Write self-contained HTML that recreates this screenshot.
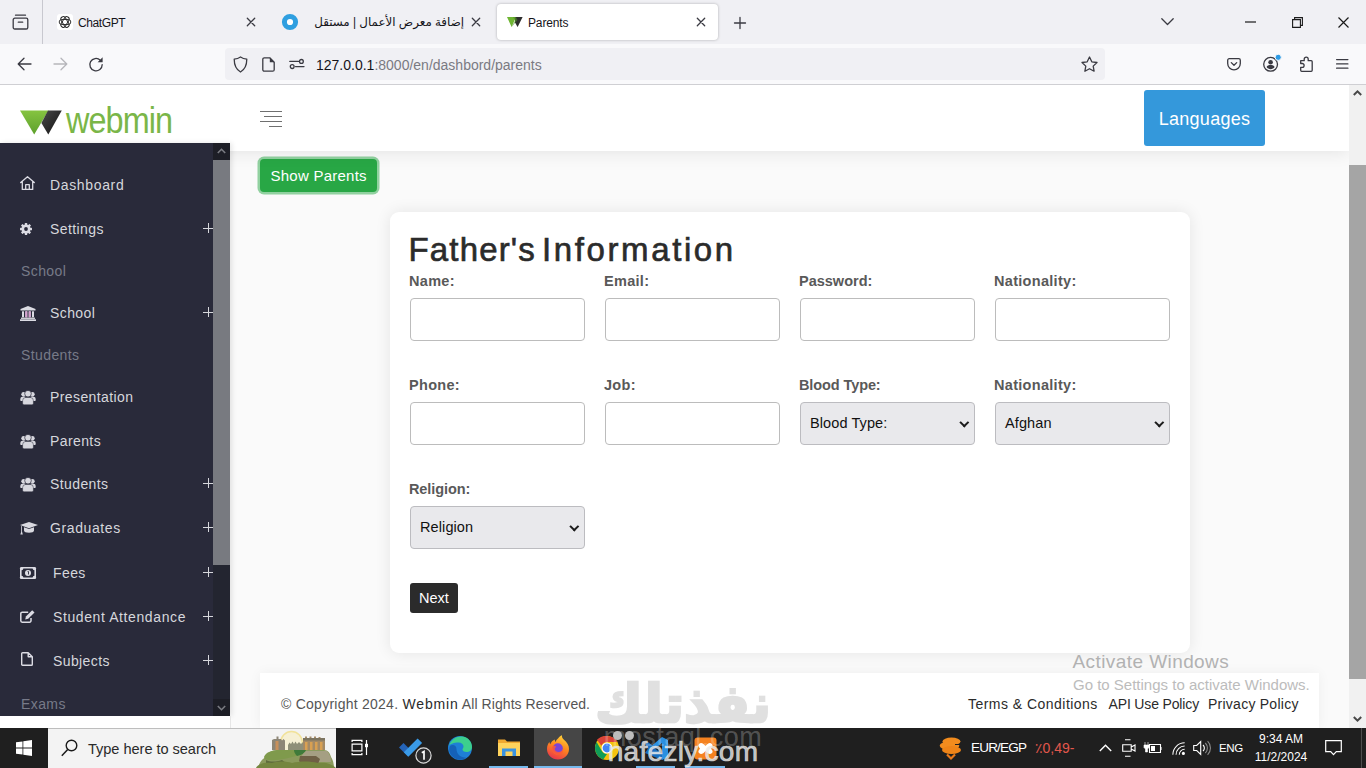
<!DOCTYPE html>
<html lang="en">
<head>
<meta charset="utf-8">
<title>Parents</title>
<style>
*{box-sizing:border-box;margin:0;padding:0}
html,body{width:1366px;height:768px;overflow:hidden;background:#fff;font-family:"Liberation Sans","Noto Sans CJK SC",sans-serif;}
.abs{position:absolute}
#root{position:relative;width:1366px;height:768px;overflow:hidden}
/* ---------- browser chrome ---------- */
#tabbar{left:0;top:0;width:1366px;height:44px;background:#f0f0f4}
#toolbar{left:0;top:44px;width:1366px;height:40px;background:#f9f9fb;border-bottom:1px solid #cfcfd3}
#toolbar{height:41px}
.tabtxt{font-size:12px;letter-spacing:-.15px;color:#15141a;white-space:nowrap;line-height:16px}
#tab3{left:497px;top:4px;width:221px;height:36px;background:#fff;border-radius:4px;box-shadow:0 0 3px rgba(0,0,0,.28)}
#urlbar{left:225px;top:48px;width:880px;height:32px;background:#f0f0f4;border-radius:4px}
#url{left:316px;top:57px;font-size:14px;line-height:17px;color:#15141a;white-space:nowrap}
#url span{color:#7a7a82}
svg{position:absolute;overflow:visible}
.ic{fill:none;stroke:#3a3a42;stroke-width:1.3;stroke-linecap:round;stroke-linejoin:round}
/* ---------- page ---------- */
#page{left:0;top:85px;width:1349px;height:643px;background:#fafafa;overflow:hidden}
#vscroll{left:1349px;top:85px;width:17px;height:643px;background:#f1f1f1}
#vthumb{left:1349px;top:165px;width:17px;height:514px;background:#a5a5a5}
#header{left:0;top:0;width:1349px;height:66px;background:#fff;box-shadow:0 2px 16px rgba(0,0,0,.09)}
#side{left:0;top:58px;width:230px;height:573px;background:#292a3a;box-shadow:2px 0 5px rgba(0,0,0,.10)}
#sidesb{left:213px;top:58px;width:17px;height:573px;background:#232530}
#sidethumb{left:213px;top:75px;width:17px;height:405px;background:#787a80}
.nav{left:50px;font-size:14px;color:#d6d7dc;white-space:nowrap;line-height:20px;letter-spacing:.4px;margin-top:1px}
.lab{left:21px;font-size:14px;color:#777a88;white-space:nowrap;line-height:20px;letter-spacing:.4px;margin-top:1px}
.plus{left:203px;width:10px;height:10px}
.plus:before{content:"";position:absolute;left:0;top:4.5px;width:10px;height:1px;background:#d6d7dc}
.plus:after{content:"";position:absolute;left:4.5px;top:0;width:1px;height:10px;background:#d6d7dc}
#langs{left:1144px;top:5px;width:121px;height:56px;background:#3498db;border-radius:3px;color:#fff;font-size:18px;line-height:59px;text-align:center;letter-spacing:.25px}
#showp{left:260px;top:73.600px;width:117.300px;height:33.500px;background:#28a745;border-radius:4px;color:#fff;font-size:15px;line-height:33.500px;text-align:center;box-shadow:0 0 0 2.500px rgba(40,167,69,.5);letter-spacing:.25px}
#card{left:390px;top:127px;width:800px;height:441px;background:#fff;border-radius:9px;box-shadow:0 0 16px rgba(0,0,0,.09)}
#title{left:18.500px;top:18px;font-size:33px;line-height:40px;color:#2b2b2b;white-space:nowrap;letter-spacing:1.150px;-webkit-text-stroke:.650px #2b2b2b}
.fl{font-size:14.500px;font-weight:bold;color:#595959;line-height:18px;white-space:nowrap;letter-spacing:.3px;margin-left:-1px}
.inp{width:175px;height:43px;border:1px solid #bcbcbc;border-radius:4px;background:#fff}
.sel{width:175px;height:43px;border:1px solid #bcbcc0;border-radius:4px;background:#e9e9ec;font-size:14.5px;color:#111;line-height:41px;padding-left:9px;white-space:nowrap;letter-spacing:.1px}
.sel:after{content:"";position:absolute;right:6.300px;top:16px;width:4.600px;height:4.600px;border-right:2.200px solid #1c1c1c;border-bottom:2.200px solid #1c1c1c;transform:rotate(45deg)}
#next{left:20px;top:371px;width:48px;height:30px;background:#2b2b2b;border-radius:3px;color:#fff;font-size:14.500px;line-height:31px;text-align:center}
#footer{left:260px;top:588px;width:1059px;height:55px;background:#fff;box-shadow:0 0 12px rgba(0,0,0,.05)}
.ft{font-size:14px;line-height:18px;white-space:nowrap;color:#555;letter-spacing:.25px}
/* ---------- taskbar ---------- */
#taskbar{left:0;top:728px;width:1366px;height:40px;background:#1f1f1f}
#search{left:48px;top:0;width:288px;height:40px;background:#f3f3f3;border-top:1px solid #bdbdbd;overflow:hidden}
.tb{color:#fff;font-size:12px;white-space:nowrap;line-height:14px}
</style>
</head>
<body>
<div id="root">

<!-- ================= TAB BAR ================= -->
<div id="tabbar" class="abs">
  <div class="abs" style="left:42px;top:0;width:1px;height:44px;background:#c8c8cf"></div>
  <svg style="left:12px;top:14px" width="17" height="17" viewBox="0 0 17 17"><path class="ic" d="M3.5 1.2h10M2.8 4.2h11.4a1.6 1.6 0 0 1 1.6 1.6v7.6a1.6 1.6 0 0 1-1.6 1.6H2.8a1.6 1.6 0 0 1-1.6-1.6V5.8a1.6 1.6 0 0 1 1.6-1.6zM6.3 8.2h4.4"/></svg>
  <!-- tab 1 -->
  <div class="abs" style="left:57px;top:14px;width:16px;height:16px;background:#fff;border-radius:3px"></div>
  <svg style="left:58px;top:15px" width="14" height="14" viewBox="0 0 14 14"><g fill="none" stroke="#2a2a2a" stroke-width=".950"><rect x="1.200" y="4.500" width="11.600" height="5" rx="2.500"/><rect x="1.200" y="4.500" width="11.600" height="5" rx="2.500" transform="rotate(60 7 7)"/><rect x="1.200" y="4.500" width="11.600" height="5" rx="2.500" transform="rotate(120 7 7)"/></g></svg>
  <div class="abs tabtxt" style="left:78px;top:15px;letter-spacing:-.4px">ChatGPT</div>
  <svg style="left:247.4px;top:18.400px" width="8" height="8" viewBox="0 0 8 8"><path class="ic" d="M.300.300l7.400 7.400M7.700.300L.300 7.700" stroke-width="1.150"/></svg>
  <!-- tab 2 -->
  <svg style="left:282px;top:14px" width="16" height="16" viewBox="0 0 16 16"><circle cx="8" cy="8" r="5.600" fill="#fff" stroke="#2f9fe0" stroke-width="5"/></svg>
  <div class="abs tabtxt" dir="rtl" style="left:302px;top:14px;width:162px;text-align:right;font-size:11.850px;letter-spacing:0;font-family:'Liberation Sans','DejaVu Sans',sans-serif">إضافة معرض الأعمال | مستقل</div>
  <svg style="left:472.4px;top:18.400px" width="8" height="8" viewBox="0 0 8 8"><path class="ic" d="M.300.300l7.400 7.400M7.700.300L.300 7.700" stroke-width="1.150"/></svg>
  <!-- tab 3 active -->
  <div id="tab3" class="abs"></div>
  <svg style="left:507px;top:16px" width="16" height="12" viewBox="0 0 16 12"><path d="M0 1h9L4.6 11z" fill="#6fb533"/><path d="M8.2 1h7.4L10.6 11 8 6.4z" fill="#2d2d2d"/><path d="M4.6 11L8 4.5 6 1H9l1.5 3z" fill="#4d8c25" opacity=".6"/></svg>
  <div class="abs tabtxt" style="left:528px;top:15px">Parents</div>
  <svg style="left:697.4px;top:18.400px" width="8" height="8" viewBox="0 0 8 8"><path class="ic" d="M.300.300l7.400 7.400M7.700.300L.300 7.700" stroke-width="1.150"/></svg>
  <!-- new tab -->
  <svg style="left:733.500px;top:16.500px" width="12" height="12" viewBox="0 0 12 12"><path class="ic" d="M6 .500v11M.500 6h11" stroke-width="1.200"/></svg>
  <!-- list all tabs -->
  <svg style="left:1161px;top:18px" width="13" height="8" viewBox="0 0 13 8"><path class="ic" d="M.8.8l5.7 5.7L12.2.8"/></svg>
  <!-- window controls -->
  <svg style="left:1245px;top:21px" width="11" height="2" viewBox="0 0 11 2"><path d="M0 1h11" stroke="#1a1a1a" stroke-width="1.2"/></svg>
  <svg style="left:1292px;top:17px" width="11" height="11" viewBox="0 0 11 11"><path d="M.6 2.6h7.8v7.8H.6zM2.6 2.6V.6h7.8v7.8h-2" fill="none" stroke="#1a1a1a" stroke-width="1.1"/></svg>
  <svg style="left:1338px;top:17px" width="11" height="11" viewBox="0 0 11 11"><path d="M.5.5l10 10M10.500.5l-10 10" fill="none" stroke="#1a1a1a" stroke-width="1.2"/></svg>
</div>

<!-- ================= TOOLBAR ================= -->
<div id="toolbar" class="abs"></div>
<svg style="left:17px;top:57px" width="15" height="14" viewBox="0 0 15 14"><path class="ic" d="M14 7H1.2M7 1.2L1.2 7 7 12.800" stroke-width="1.5"/></svg>
<svg style="left:53px;top:57px" width="15" height="14" viewBox="0 0 15 14"><path class="ic" d="M1 7h12.800M8 1.200L13.800 7 8 12.800" stroke-width="1.5" style="stroke:#b6b6bb"/></svg>
<svg style="left:88px;top:56px" width="16" height="16" viewBox="0 0 16 16"><path class="ic" d="M12.300 4.200A6.200 6.200 0 1 0 14.200 8.600" stroke-width="1.400"/><path d="M14.600 1.200v5h-5z" fill="#3a3a42"/></svg>
<div id="urlbar" class="abs"></div>
<svg style="left:233px;top:56px" width="15" height="17" viewBox="0 0 15 17"><path class="ic" d="M7.500 1C5.600 2.400 3.400 3 1.200 3.100c0 6 1.700 10.400 6.300 12.900 4.600-2.500 6.300-6.900 6.300-12.900C11.600 3 9.400 2.400 7.500 1z"/></svg>
<svg style="left:262px;top:57px" width="13" height="15" viewBox="0 0 13 15"><path class="ic" d="M2.300.8h5.500l4.400 4.400v7.500a1.500 1.500 0 0 1-1.500 1.500H2.300A1.500 1.500 0 0 1 .8 12.700V2.300A1.500 1.500 0 0 1 2.300.8z"/><path d="M7.800.8v4.400h4.400z" fill="#3a3a42"/></svg>
<svg style="left:289px;top:59px" width="16" height="10" viewBox="0 0 16 10"><path class="ic" d="M.800 2.400h8.700M6.500 7.600h8.500"/><circle class="ic" cx="12.400" cy="2.400" r="1.900"/><circle class="ic" cx="3.200" cy="7.600" r="1.900"/></svg>
<div id="url" class="abs">127.0.0.1<span>:8000/en/dashbord/parents</span></div>
<svg style="left:1081px;top:56px" width="17" height="16" viewBox="0 0 17 16"><path class="ic" d="M8.500 1l2.300 4.800 5.200.7-3.800 3.600.9 5.100-4.600-2.500-4.600 2.500.9-5.100L1 6.500l5.200-.7z"/></svg>
<svg style="left:1227px;top:58px" width="14" height="12.500" viewBox="0 0 14 12.500"><path class="ic" d="M2.200.700h9.600a1.500 1.500 0 0 1 1.500 1.500v3.300a6.300 6.300 0 0 1-12.600 0V2.200A1.500 1.500 0 0 1 2.200.700zM4.300 4.600L7 7.200l2.700-2.600"/></svg>
<svg style="left:1262px;top:54px" width="20" height="19" viewBox="0 0 20 19"><circle class="ic" cx="8.600" cy="10.300" r="6.900"/><circle cx="8.600" cy="8.300" r="2.300" fill="#3a3a42"/><path d="M4.600 13c.6-1.300 2-1.900 4-1.900s3.400.6 4 1.900c-.8 1.400-2.300 2.200-4 2.200s-3.200-.8-4-2.200z" fill="#3a3a42"/><circle cx="16.200" cy="3.300" r="3.100" fill="#2d9be5" stroke="#f9f9fb" stroke-width="1"/></svg>
<svg style="left:1300px;top:56px" width="13" height="16" viewBox="0 0 13 16"><path class="ic" d="M.700 4.700h3.500V3.200a2 2 0 0 1 4 0v1.500h3a1 1 0 0 1 1 1v8.600a1 1 0 0 1-1 1H1.700a1 1 0 0 1-1-1v-3h1.500a1.900 1.900 0 0 0 0-3.800H.700z"/></svg>
<svg style="left:1336px;top:59px" width="12.500" height="10" viewBox="0 0 12.500 10"><path class="ic" d="M.600.600h11.300M.600 4.900h11.300M.600 9.200h11.300" stroke-width="1.250"/></svg>

<!-- ================= PAGE ================= -->
<div id="page" class="abs">
  <!-- main: show parents -->
  <div id="showp" class="abs">Show Parents</div>
  <!-- card -->
  <div id="card" class="abs">
    <div id="title" class="abs"><span>Father's</span><span style="letter-spacing:2.600px;margin-left:6.200px">Information</span></div>
    <div class="abs fl" style="left:20px;top:60px">Name:</div>
    <div class="abs fl" style="left:215px;top:60px">Email:</div>
    <div class="abs fl" style="left:410px;top:60px;letter-spacing:0">Password:</div>
    <div class="abs fl" style="left:605px;top:60px">Nationality:</div>
    <div class="abs inp" style="left:20px;top:86px"></div>
    <div class="abs inp" style="left:215px;top:86px"></div>
    <div class="abs inp" style="left:410px;top:86px"></div>
    <div class="abs inp" style="left:605px;top:86px"></div>
    <div class="abs fl" style="left:20px;top:164px">Phone:</div>
    <div class="abs fl" style="left:215px;top:164px">Job:</div>
    <div class="abs fl" style="left:410px;top:164px;letter-spacing:-.1px">Blood Type:</div>
    <div class="abs fl" style="left:605px;top:164px">Nationality:</div>
    <div class="abs inp" style="left:20px;top:190px"></div>
    <div class="abs inp" style="left:215px;top:190px"></div>
    <div class="abs sel" style="left:410px;top:190px">Blood Type:</div>
    <div class="abs sel" style="left:605px;top:190px">Afghan</div>
    <div class="abs fl" style="left:20px;top:268px;letter-spacing:-.1px">Religion:</div>
    <div class="abs sel" style="left:20px;top:294px">Religion</div>
    <div id="next" class="abs">Next</div>
  </div>
  <!-- footer -->
  <div id="footer" class="abs">
    <div class="abs ft" style="left:21px;top:22px">© Copyright 2024. <span style="color:#2b2b2b;letter-spacing:.85px">Webmin</span><span style="letter-spacing:.07px"> All Rights Reserved.</span></div>
    <div class="abs ft" style="left:708px;top:22px;color:#2b2b2b;letter-spacing:.47px">Terms &amp; Conditions</div>
    <div class="abs ft" style="left:848.500px;top:22px;color:#2b2b2b;letter-spacing:-.15px">API Use Policy</div>
    <div class="abs ft" style="left:948px;top:22px;color:#2b2b2b">Privacy Policy</div>
  </div>
  <!-- header -->
  <div id="header" class="abs"></div>
  <!-- sidebar -->
  <div id="side" class="abs"></div>
  <div class="abs" style="left:0;top:631px;width:231px;height:12px;background:#fff;border-right:1px solid #e6e6e6"></div>
  <div id="sidesb" class="abs"></div>
  <div id="sidethumb" class="abs"></div>
  <div class="abs" style="left:213px;top:58px;width:17px;height:17px;background:#1d1e26"></div>
  <div class="abs" style="left:213px;top:614px;width:17px;height:17px;background:#1d1e26"></div>
  <svg style="left:217px;top:63px" width="9" height="6" viewBox="0 0 9 6"><path d="M.8 5l3.700-3.700L8.200 5" fill="none" stroke="#7a7b82" stroke-width="1.600"/></svg>
  <svg style="left:217px;top:620px" width="9" height="6" viewBox="0 0 9 6"><path d="M.8 1l3.700 3.700L8.200 1" fill="none" stroke="#7a7b82" stroke-width="1.600"/></svg>
  <div class="abs nav" style="top:89px;letter-spacing:.65px">Dashboard</div>
  <div class="abs nav" style="top:133px">Settings</div><div class="abs plus" style="top:138px"></div>
  <div class="abs lab" style="top:175px">School</div>
  <div class="abs nav" style="top:217px">School</div><div class="abs plus" style="top:222px"></div>
  <div class="abs lab" style="top:259px">Students</div>
  <div class="abs nav" style="top:301px">Presentation</div>
  <div class="abs nav" style="top:345px">Parents</div>
  <div class="abs nav" style="top:388px">Students</div><div class="abs plus" style="top:393px"></div>
  <div class="abs nav" style="top:432px;letter-spacing:.6px">Graduates</div><div class="abs plus" style="top:437px"></div>
  <div class="abs nav" style="top:477px;left:53px">Fees</div><div class="abs plus" style="top:482px"></div>
  <div class="abs nav" style="top:521px;left:53px;letter-spacing:.6px">Student Attendance</div><div class="abs plus" style="top:526px"></div>
  <div class="abs nav" style="top:565px;left:53px">Subjects</div><div class="abs plus" style="top:570px"></div>
  <div class="abs lab" style="top:608px">Exams</div>
  <!-- side icons -->
  <svg style="left:20px;top:91px" width="15" height="14" viewBox="0 0 15 14"><path d="M.700 6.500L7.500.700l6.800 5.800M2.300 5.400v8h10.400v-8M5.700 13.400V8.700h3.600v4.700" fill="none" stroke="#dcdce4" stroke-width="1.300" stroke-linejoin="round" stroke-linecap="round"/></svg>
  <svg style="left:20px;top:138px" width="12" height="12" viewBox="0 0 12 12"><g fill="#dcdce4"><circle cx="6" cy="6" r="4.500"/><g id="gt"><rect x="4.800" y="0" width="2.400" height="12" rx=".5"/></g><use href="#gt" transform="rotate(45 6 6)"/><use href="#gt" transform="rotate(90 6 6)"/><use href="#gt" transform="rotate(135 6 6)"/></g><circle cx="6" cy="6" r="1.900" fill="#292a3a"/></svg>
  <svg style="left:20px;top:221px" width="16" height="15" viewBox="0 0 16 15"><g fill="#dcdce4"><path d="M8 0l7.500 3v1.500H.500V3z"/><rect x="2" y="5.300" width="2" height="6"/><rect x="5.300" y="5.300" width="2" height="6"/><rect x="8.700" y="5.300" width="2" height="6"/><rect x="12" y="5.300" width="2" height="6"/><rect x="1" y="11.600" width="14" height="1.300"/><rect x="0" y="13.300" width="16" height="1.700"/></g><rect x="5.300" y="5.300" width="2" height="6" fill="#d7a0d0"/><rect x="8.700" y="5.300" width="2" height="6" fill="#d7a0d0"/></svg>
  <svg style="left:19.500px;top:305.3px" width="16" height="15" viewBox="0 0 16 15"><g fill="#d7d7de"><circle cx="3.700" cy="4.300" r="2.400"/><circle cx="12.300" cy="4.300" r="2.400"/><path d="M.300 10.200V9a2.300 2.300 0 0 1 2.300-2.300h2.600v4.300H1.100a.800.800 0 0 1-.8-.8zM15.700 10.200V9a2.300 2.300 0 0 0-2.300-2.300h-2.600v4.300h4.100a.800.800 0 0 0 .8-.8z"/><circle cx="8" cy="3.700" r="3.300" stroke="#292a3a" stroke-width=".700"/><path d="M2.600 13.300v-2.600a3.300 3.300 0 0 1 3.300-3.300h4.200a3.300 3.300 0 0 1 3.300 3.300v2.600a1.500 1.500 0 0 1-1.500 1.500H4.100a1.500 1.500 0 0 1-1.500-1.500z" stroke="#292a3a" stroke-width=".500"/></g></svg>
  <svg style="left:19.500px;top:349.3px" width="16" height="15" viewBox="0 0 16 15"><g fill="#d7d7de"><circle cx="3.700" cy="4.300" r="2.400"/><circle cx="12.300" cy="4.300" r="2.400"/><path d="M.300 10.200V9a2.300 2.300 0 0 1 2.300-2.300h2.600v4.300H1.100a.800.800 0 0 1-.8-.8zM15.700 10.200V9a2.300 2.300 0 0 0-2.300-2.300h-2.600v4.300h4.100a.800.800 0 0 0 .8-.8z"/><circle cx="8" cy="3.700" r="3.300" stroke="#292a3a" stroke-width=".700"/><path d="M2.600 13.300v-2.600a3.300 3.300 0 0 1 3.300-3.300h4.200a3.300 3.300 0 0 1 3.300 3.300v2.600a1.500 1.500 0 0 1-1.500 1.500H4.100a1.500 1.500 0 0 1-1.500-1.500z" stroke="#292a3a" stroke-width=".500"/></g></svg>
  <svg style="left:19.500px;top:392.3px" width="16" height="15" viewBox="0 0 16 15"><g fill="#d7d7de"><circle cx="3.700" cy="4.300" r="2.400"/><circle cx="12.300" cy="4.300" r="2.400"/><path d="M.300 10.200V9a2.300 2.300 0 0 1 2.300-2.300h2.600v4.300H1.100a.800.800 0 0 1-.8-.8zM15.700 10.200V9a2.300 2.300 0 0 0-2.300-2.300h-2.600v4.300h4.100a.800.800 0 0 0 .8-.8z"/><circle cx="8" cy="3.700" r="3.300" stroke="#292a3a" stroke-width=".700"/><path d="M2.600 13.300v-2.600a3.300 3.300 0 0 1 3.300-3.300h4.200a3.300 3.300 0 0 1 3.300 3.300v2.600a1.500 1.500 0 0 1-1.500 1.500H4.100a1.500 1.500 0 0 1-1.500-1.500z" stroke="#292a3a" stroke-width=".500"/></g></svg>
  <svg style="left:20px;top:437px" width="18" height="13" viewBox="0 0 18 13"><g fill="#d9d9e0"><path d="M9 0l9 3-9 3.200L0 3z"/><path d="M4 5.200l5 1.900 5-1.900v3.300c0 1.300-2.200 2.300-5 2.300s-5-1-5-2.300z"/><path d="M1.200 4v5.500l-.8 3h2.400l-.8-3V4.300z"/></g></svg>
  <svg style="left:20px;top:482px" width="16" height="12" viewBox="0 0 16 12"><rect x=".800" y=".800" width="14.400" height="10.400" rx="1" fill="none" stroke="#dcdce4" stroke-width="1.600"/><circle cx="8" cy="6" r="3" fill="#dcdce4"/><path d="M7.600 4.500h.9v3" stroke="#292a3a" stroke-width=".900" fill="none"/><circle cx="1.600" cy="1.600" r="1.700" fill="#dcdce4"/><circle cx="14.400" cy="1.600" r="1.700" fill="#dcdce4"/><circle cx="1.600" cy="10.400" r="1.700" fill="#dcdce4"/><circle cx="14.400" cy="10.400" r="1.700" fill="#dcdce4"/></svg>
  <svg style="left:20px;top:525px" width="15" height="13" viewBox="0 0 15 13"><path d="M11 8v2.800a1.400 1.400 0 0 1-1.400 1.400H2.200A1.400 1.400 0 0 1 .800 10.800V3.600a1.400 1.400 0 0 1 1.400-1.400h6" fill="none" stroke="#dcdce4" stroke-width="1.500"/><path d="M12.200.300l2.300 2.300-6.300 6.200-3 .8.700-3.100z" fill="#dcdce4"/></svg>
  <svg style="left:21px;top:567px" width="12" height="14" viewBox="0 0 12 14"><path d="M1.600.700h5.600l4.100 4.100v7.600a.900.900 0 0 1-.9.900H1.600a.900.900 0 0 1-.9-.9V1.600a.900.900 0 0 1 .9-.9zM7.200.700v4.100h4.100" fill="none" stroke="#dcdce4" stroke-width="1.400" stroke-linejoin="round"/></svg>
  <svg style="left:20px;top:25px" width="42" height="25" viewBox="0 0 42 25"><defs><linearGradient id="lg1" x1="0" y1="0" x2="0" y2="1"><stop offset="0" stop-color="#86c440"/><stop offset="1" stop-color="#5da02c"/></linearGradient><linearGradient id="lg2" x1="0" y1="0" x2="1" y2="1"><stop offset="0" stop-color="#4a4a4a"/><stop offset="1" stop-color="#111"/></linearGradient></defs><path d="M0 .400h28.500L14.200 24.600z" fill="url(#lg1)"/><path d="M28 .400h13.800L28.300 24.400 21.400 13z" fill="url(#lg2)"/></svg>
  <div id="logotxt" class="abs" style="left:66px;top:16px;font-size:36px;line-height:40px;color:#7ab648;letter-spacing:-1px;white-space:nowrap;transform:scaleX(.9);transform-origin:0 0">webmin</div>
  <div class="abs" style="left:260px;top:26px;width:22px;height:1px;background:#6f6f6f"></div>
  <div class="abs" style="left:264px;top:31px;width:18px;height:1px;background:#6f6f6f"></div>
  <div class="abs" style="left:260px;top:36px;width:22px;height:1px;background:#6f6f6f"></div>
  <div class="abs" style="left:269px;top:41px;width:13px;height:1px;background:#6f6f6f"></div>
  <div id="langs" class="abs">Languages</div>
</div>
<div id="vscroll" class="abs"></div>
<div id="vthumb" class="abs"></div>
<svg style="left:1353px;top:90px" width="9" height="6" viewBox="0 0 9 6"><path d="M.8 5l3.700-3.700L8.200 5" fill="none" stroke="#484848" stroke-width="2"/></svg>
<svg style="left:1353px;top:716px" width="9" height="6" viewBox="0 0 9 6"><path d="M.8 1l3.700 3.700L8.200 1" fill="none" stroke="#484848" stroke-width="2"/></svg>


<!-- ================= TASKBAR ================= -->
<div id="taskbar" class="abs">
  <div class="abs" style="left:1361px;top:0;width:1px;height:40px;background:#4d4d4d"></div>
  <!-- start -->
  <svg style="left:16px;top:12px" width="16" height="16" viewBox="0 0 16 16"><path d="M0 2.300L6.500 1.400v6.200H0zM7.300 1.300L16 0v7.600H7.300zM0 8.400h6.500v6.200L0 13.700zM7.300 8.400H16V16l-8.700-1.300z" fill="#fff"/></svg>
  <!-- search -->
  <div id="search" class="abs"></div>
  <svg style="left:61px;top:11px" width="17" height="18" viewBox="0 0 17 18"><circle cx="10.500" cy="6.500" r="5.300" fill="none" stroke="#1a1a1a" stroke-width="1.400"/><path d="M6.700 10.500L.8 16.800" stroke="#1a1a1a" stroke-width="1.500" fill="none"/></svg>
  <div class="abs" style="left:88px;top:11.500px;font-size:14.600px;line-height:18px;color:#2a2a2a;white-space:nowrap;letter-spacing:-.05px">Type here to search</div>
  <!-- castle illustration -->
  <svg style="left:256px;top:1px" width="80" height="39" viewBox="0 0 80 39">
    <circle cx="35.500" cy="13.300" r="10.800" fill="#f6f0d4" stroke="#f1e29a" stroke-width="1.500"/>
    <path d="M16 21V11l2-1h2.500V7.500h2V10H25l1 1.500 1.500-1.500 1.500 1.500V21z" fill="#8d8676"/>
    <path d="M19.500 12h3v9h-3z" fill="#c9905a"/>
    <path d="M32 21v-5l1.500-2.500L35 15l1.500-2.500L38 15l1.500-2.500L41 15l2-2 2 2 2-2v8z" fill="#8f8f78"/>
    <path d="M47 21V9h2V7.500h2V9h2.500V7.500h2V9H58V7.500h2V9h2.500V8h2v1h2.500v1.500l2 .5V21z" fill="#a48a66"/>
    <path d="M49 13h2.500v8H49zM54 13h2.500v8H54zM59 13h2.500v8H59zM64 13h2.500v8H64z" fill="#d9a052"/>
    <path d="M47 9h22v2.500H47z" fill="#7c7460"/>
    <path d="M2 39c1-5 4-9 8-11 1-4 5-7 12-7h46c4 0 6 3 7 7 2 3 3 7 3 11z" fill="#8b9a5c"/>
    <path d="M8 28c2-5 8-7 16-7h26c-1 3-5 5-10 6-8 2-18 5-26 4-4 0-6-1-6-3z" fill="#7f9a4c"/>
    <path d="M38 21h12c-1 3-4 5-9 6-2-2-3-4-3-6z" fill="#3f7a3a"/>
    <path d="M50 22h21c3 3 4 7 4 11H44c0-4 2-8 6-11z" fill="#a59f83"/>
    <path d="M44 27h16l4 3-2 5H46l-3-3z" fill="#6f6045"/>
    <path d="M10 31c4 2 10 2 16 0l4 3c-6 3-14 3-20 1z" fill="#5f6b3c"/>
    <path d="M0 39c2-4 8-6 16-5 6-2 14-2 20 0 8-2 18-2 26 0 8-1 14 1 18 5z" fill="#75863f"/>
  </svg>
  <!-- task view -->
  <svg style="left:351px;top:11px" width="17" height="17" viewBox="0 0 17 17"><path d="M1.100 3V1.300h9.800V3M1.100 14v1.700h9.800V14M1.100 5.100h9.800v6.800H1.100zM15.500 1v15" fill="none" stroke="#fff" stroke-width="1.200"/><rect x="14" y="4.800" width="3" height="3.400" fill="#fff"/></svg>
  <!-- To Do -->
  <svg style="left:398px;top:9px" width="36" height="28" viewBox="0 0 36 28"><path d="M1 10.500l4.500-4.500 9 9-4.500 4.500z" fill="#2564b8"/><path d="M10 19.500L21 1.500l4.500 4.500-15.500 13.500z" fill="#2564b8" opacity="0"/><path d="M5.800 15.300L19.600 1.500l4.500 4.500-13.800 13.800z" fill="#3a9be8"/><circle cx="25.500" cy="18.500" r="7.600" fill="#2b2b2d" stroke="#dcdcdc" stroke-width="1.200"/><path d="M23.800 15.800l2.200-1.300v8.300" stroke="#fff" stroke-width="1.700" fill="none"/></svg>
  <!-- Edge -->
  <svg style="left:447px;top:7px" width="26" height="26" viewBox="0 0 26 26"><circle cx="13" cy="13" r="12" fill="#1e7fd6"/><path d="M2 11C4 4 10 1 15 1.500c6 .5 10 5 10 10.500 0 3-2.500 5-5.500 5-2.500 0-4-1-4-2.500 0-1 1-1.500 1-3 0-2-2-4-5-4C7 7.500 3 9 2 11z" fill="#3ccf8e"/><path d="M9.500 14c0 5 4 9 9.500 8.500-3 3-9 3-13-.5s-4.500-8-3-11c2-2 6.500-1.500 6.500 3z" fill="#1561b8"/></svg>
  <!-- Explorer -->
  <svg style="left:498px;top:10px" width="22" height="19" viewBox="0 0 22 19"><path d="M0 1.500h7l2 2h13V18H0z" fill="#f0a830"/><path d="M0 5h22v13H0z" fill="#ffd35c"/><path d="M4 10.500h14V18H4z" fill="#3b93e0"/><path d="M7.500 13.500h7V18h-7z" fill="#ffd35c"/></svg>
  <div class="abs" style="left:489px;top:38px;width:39px;height:2px;background:#76b9ed"></div>
  <!-- Firefox (active) -->
  <div class="abs" style="left:534px;top:0;width:48px;height:40px;background:#464646"></div>
  <div class="abs" style="left:534px;top:38px;width:48px;height:2px;background:#76b9ed"></div>
  <svg style="left:546px;top:7px" width="24" height="25" viewBox="0 0 24 25"><defs><linearGradient id="ffg" x1=".7" y1="0" x2=".3" y2="1"><stop offset="0" stop-color="#ffd23a"/><stop offset=".45" stop-color="#ff8a1c"/><stop offset="1" stop-color="#e8334e"/></linearGradient></defs><path d="M12 3.500c1-1.500 2.500-2.800 4-3.300-.3 1.800.5 3.200 2 4.500 3 2.500 5 5.500 5 9.300 0 6-5 10.500-11 10.500S1 20 1 14c0-3 1-5.500 2.500-7 0 1 .3 1.800.8 2.300C5 7 7 5 9 4.500c-.3 1 0 2 .5 2.500.5-1.500 1.400-2.600 2.500-3.500z" fill="url(#ffg)"/><circle cx="11.800" cy="13.200" r="5" fill="#7a45d6"/><path d="M6.500 11c1.500-.5 3 0 4 1-1 .3-1.700 1-1.700 2 0 1.800 1.700 3 3.700 3 2.300 0 4-1.500 4.500-3.500.8 3.500-1.800 6.500-5.200 6.500-3.300 0-6-2.700-6-6 0-1 .3-2 .7-3z" fill="#ff5a36" opacity=".85"/></svg>
  <!-- Chrome -->
  <svg style="left:594px;top:7px" width="26" height="26" viewBox="0 0 26 26"><circle cx="13" cy="13" r="12" fill="#f4c20d"/><path d="M13 1a12 12 0 0 1 10.400 6H13a6 6 0 0 0-5.600 3.800L3 4.800A12 12 0 0 1 13 1z" fill="#db4437"/><path d="M2.600 7l5.200 9a6 6 0 0 0 5.200 3l-3.700 5.400A12 12 0 0 1 2.600 7z" fill="#0f9d58"/><circle cx="13" cy="13" r="5.500" fill="#fff"/><circle cx="13" cy="13" r="4.400" fill="#4285f4"/></svg>
  <!-- VS Code -->
  <svg style="left:644px;top:8px" width="25" height="25" viewBox="0 0 25 25"><path d="M18 1l6 3v17l-6 3L4 13z" fill="#2a8fe0"/><path d="M1 8l3-2 14 11v7L1 17l3-4.500z" fill="#1a6fbf"/><path d="M18 7v11l-7-5.500z" fill="#1f1f1f"/></svg>
  <div class="abs" style="left:636px;top:38px;width:39px;height:2px;background:#76b9ed"></div>
  <!-- XAMPP -->
  <svg style="left:694px;top:9px" width="23" height="23" viewBox="0 0 23 23"><rect x=".5" y=".5" width="22" height="22" rx="3" fill="#f58220"/><path d="M5 7c2-2 4-1 6.500 2C14 6 16 5 18 7c1.500 1.500 0 3-1 4.500 1 1.500 2.500 3 1 4.500-2 2-4 1-6.500-2C9 17 7 18 5 16c-1.500-1.500 0-3 1-4.500C5 10 3.500 8.500 5 7z" fill="#fff"/></svg>
  <div class="abs" style="left:685px;top:38px;width:40px;height:2px;background:#76b9ed"></div>
  <!-- tray: currency widget -->
  <svg style="left:939px;top:9px" width="24" height="24" viewBox="0 0 24 24"><ellipse cx="12.500" cy="4.500" rx="9" ry="4" fill="#f28c1e"/><ellipse cx="10.500" cy="8.800" rx="9.800" ry="4.200" fill="#f28c1e"/><ellipse cx="12.500" cy="13" rx="9.500" ry="4" fill="#ee8418"/><path d="M8 17.500l4 4 4-4" fill="none" stroke="#ea7a1a" stroke-width="2.200"/><path d="M16 7.500h6" stroke="#1f1f1f" stroke-width="1"/></svg>
  <div class="abs tb" style="left:971px;top:12px;font-size:13.500px;line-height:16px;letter-spacing:-.8px">EUR/EGP</div>
  <div class="abs tb" style="left:1035px;top:12px;font-size:14px;line-height:16px;color:#e2574c;font-family:'Liberation Sans','DejaVu Sans',sans-serif">٪0,49-</div>
  <svg style="left:1099px;top:16px" width="13" height="8" viewBox="0 0 13 8"><path d="M.800 7l5.700-5.700L12.200 7" fill="none" stroke="#fff" stroke-width="1.400"/></svg>
  <!-- meet now -->
  <svg style="left:1122px;top:11px" width="15" height="18" viewBox="0 0 15 18"><path d="M3 .700h5.500M3 17.300h5.500M.700 5.800h8.500v6.400H.700zM9.200 8l3.800-2v6l-3.800-2" fill="none" stroke="#fff" stroke-width="1.100"/></svg>
  <!-- battery -->
  <svg style="left:1144px;top:13px" width="18" height="14" viewBox="0 0 18 14"><path d="M5.500 3.500h11v8h-11zM17 6v3" fill="none" stroke="#fff" stroke-width="1.100"/><path d="M7 5h4v5H7z" fill="#fff"/><path d="M1 1v3M4 1v3M0 4h5v2.500L3.500 8v3h-2V8L0 6.500z" fill="#fff" stroke="#fff" stroke-width=".6"/></svg>
  <!-- wifi -->
  <svg style="left:1171.500px;top:14px" width="13.500" height="13.500" viewBox="0 0 16 16"><path d="M1 15A14 14 0 0 1 15 1M4.800 15A10.200 10.200 0 0 1 15 4.800M8.600 15A6.400 6.400 0 0 1 15 8.600" fill="none" stroke="#fff" stroke-width="1.200"/><circle cx="13.500" cy="13.500" r="1.800" fill="#fff"/></svg>
  <!-- volume -->
  <svg style="left:1193px;top:12px" width="17" height="16" viewBox="0 0 17 16"><path d="M.700 5.500h3l4-4v13l-4-4h-3z" fill="none" stroke="#fff" stroke-width="1.100"/><path d="M10 5a4 4 0 0 1 0 6" fill="none" stroke="#fff" stroke-width="1.100"/><path d="M12.300 3a7 7 0 0 1 0 10M14.600 1.200a9.500 9.500 0 0 1 0 13.600" fill="none" stroke="#8a8a8a" stroke-width="1.100"/></svg>
  <div class="abs tb" style="left:1219px;top:13px;font-size:11.500px;letter-spacing:-.4px">ENG</div>
  <div class="abs tb" style="left:1250px;top:4px;width:62px;text-align:center;font-size:12px">9:34 AM</div>
  <div class="abs tb" style="left:1250px;top:22px;width:62px;text-align:center;font-size:12px">11/2/2024</div>
  <svg style="left:1325px;top:12px" width="17" height="16" viewBox="0 0 17 16"><path d="M.700.700h15.600v11h-5l-2.800 3-2.800-3h-5z" fill="none" stroke="#fff" stroke-width="1.200"/></svg>
</div>
<!-- Windows activation watermark -->
<div class="abs" style="left:1072.500px;top:651px;font-size:19px;line-height:22px;color:#b2b2b2;white-space:nowrap;letter-spacing:.42px">Activate Windows</div>
<div class="abs" style="left:1073px;top:676px;font-size:15px;line-height:18px;color:#bcbcbc;white-space:nowrap">Go to Settings to activate Windows.</div>
<!-- site watermark -->
<div class="abs" dir="rtl" style="left:590px;top:673px;width:186px;height:55px;overflow:hidden;text-align:center;font-family:'Liberation Sans','DejaVu Sans',sans-serif;font-weight:bold;font-size:52px;line-height:62px;color:#e0e0e0;-webkit-text-stroke:2.500px #e0e0e0;white-space:nowrap;letter-spacing:0">نفذتلك</div>
<div class="abs" style="left:596px;top:728px;width:174px;height:24px;overflow:hidden"><div class="abs" style="left:0;top:-5px;width:174px;text-align:center;font-size:27px;line-height:28px;color:rgba(255,255,255,.24);white-space:nowrap;letter-spacing:.5px">mostaql.com</div></div>
<div class="abs" style="left:600px;top:737px;width:166px;text-align:center;font-size:28px;line-height:30px;color:rgba(235,235,235,.78);-webkit-text-stroke:.700px rgba(235,235,235,.78);white-space:nowrap;letter-spacing:.3px">nafezly.com</div>
<div class="abs" style="left:613px;top:731px;width:9px;height:9px;border-radius:50%;background:#bdbdbd"></div>
<div class="abs" style="left:625px;top:731px;width:9px;height:9px;border-radius:50%;background:#bdbdbd"></div>

</div>
</body>
</html>
